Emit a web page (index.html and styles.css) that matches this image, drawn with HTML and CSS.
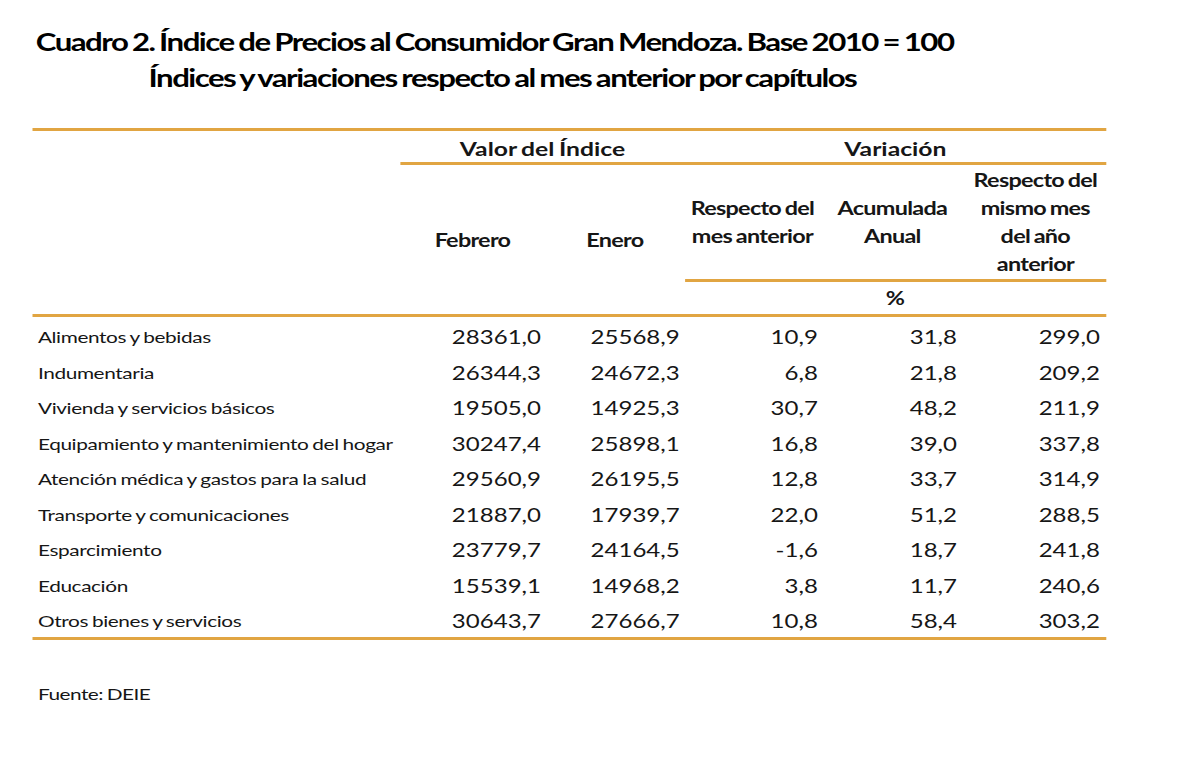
FILE: index.html
```html
<!DOCTYPE html>
<html lang="es">
<head>
<meta charset="utf-8">
<title>Cuadro 2. Índice de Precios al Consumidor Gran Mendoza</title>
<link rel="stylesheet" href="styles.css">
</head>
<body>
<div class="page">
  <h1 class="title">
    <span class="title-l1">Cuadro 2. Índice de Precios al Consumidor Gran Mendoza. Base 2010 = 100</span>
    <span class="title-l2">Índices y variaciones respecto al mes anterior por capítulos</span>
  </h1>

  <div class="tbl">
    <div class="h-blank"></div>
    <div class="h-group h-valor">Valor del Índice</div>
    <div class="h-group h-var">Variación</div>
    <div class="rule rule-group"></div>

    <div class="h-sub h-feb">Febrero</div>
    <div class="h-sub h-ene">Enero</div>
    <div class="h-sub h-resp">Respecto del<br>mes anterior</div>
    <div class="h-sub h-acum">Acumulada<br>Anual</div>
    <div class="h-sub h-anio">Respecto del<br>mismo mes<br>del año<br>anterior</div>
    <div class="rule rule-sub"></div>
    <div class="h-pct">%</div>
    <div class="rule rule-full"></div>

    <div class="row"><span class="lbl">Alimentos y bebidas</span><span class="n n1">28361,0</span><span class="n n2">25568,9</span><span class="n n3">10,9</span><span class="n n4">31,8</span><span class="n n5">299,0</span></div>
    <div class="row"><span class="lbl">Indumentaria</span><span class="n n1">26344,3</span><span class="n n2">24672,3</span><span class="n n3">6,8</span><span class="n n4">21,8</span><span class="n n5">209,2</span></div>
    <div class="row"><span class="lbl">Vivienda y servicios básicos</span><span class="n n1">19505,0</span><span class="n n2">14925,3</span><span class="n n3">30,7</span><span class="n n4">48,2</span><span class="n n5">211,9</span></div>
    <div class="row"><span class="lbl">Equipamiento y mantenimiento del hogar</span><span class="n n1">30247,4</span><span class="n n2">25898,1</span><span class="n n3">16,8</span><span class="n n4">39,0</span><span class="n n5">337,8</span></div>
    <div class="row"><span class="lbl">Atención médica y gastos para la salud</span><span class="n n1">29560,9</span><span class="n n2">26195,5</span><span class="n n3">12,8</span><span class="n n4">33,7</span><span class="n n5">314,9</span></div>
    <div class="row"><span class="lbl">Transporte y comunicaciones</span><span class="n n1">21887,0</span><span class="n n2">17939,7</span><span class="n n3">22,0</span><span class="n n4">51,2</span><span class="n n5">288,5</span></div>
    <div class="row"><span class="lbl">Esparcimiento</span><span class="n n1">23779,7</span><span class="n n2">24164,5</span><span class="n n3">-1,6</span><span class="n n4">18,7</span><span class="n n5">241,8</span></div>
    <div class="row"><span class="lbl">Educación</span><span class="n n1">15539,1</span><span class="n n2">14968,2</span><span class="n n3">3,8</span><span class="n n4">11,7</span><span class="n n5">240,6</span></div>
    <div class="row"><span class="lbl">Otros bienes y servicios</span><span class="n n1">30643,7</span><span class="n n2">27666,7</span><span class="n n3">10,8</span><span class="n n4">58,4</span><span class="n n5">303,2</span></div>
  </div>

  <p class="source">Fuente: DEIE</p>
</div>
</body>
</html>
```
FILE: styles.css
```css
html, body {
  margin: 0;
  padding: 0;
  background: #ffffff;
}

body {
  font-family: Lato, "Open Sans", sans-serif;
  color: #161616;
  overflow: hidden;
}

/* The reference is a horizontally stretched capture */
.page {
  width: 923px;
  transform: scaleX(1.3);
  transform-origin: 0 0;
}

.title {
  margin: 24px 0 0 0;
  width: 761px;
  text-align: center;
  font-size: 24px;
  font-weight: 700;
  line-height: 36px;
  letter-spacing: -1.17px;
  word-spacing: -1.1px;
  color: #000;
}

.title-l1,
.title-l2 {
  display: block;
  white-space: nowrap;
}

.title-l2 {
  padding-left: 12px;
}

.tbl {
  margin: 32px 0 0 25.4px;
  width: 825.4px;
  display: grid;
  grid-template-columns: 282.3px 111.5px 107.7px 103.8px 111.5px 108.5px;
  grid-template-rows: 31px 3px 114px 3px 32px 3px;
  grid-auto-rows: 35.5px;
  border-top: 3px solid #e1a542;
  border-bottom: 3px solid #e1a542;
}

.rule {
  background: #e1a542;
}

.h-blank { grid-column: 1; grid-row: 1 / 6; }

.h-group {
  grid-row: 1;
  display: flex;
  align-items: center;
  justify-content: center;
  font-weight: 700;
  font-size: 19px;
  word-spacing: -1.2px;
  padding-top: 3px;
}
.h-valor { grid-column: 2 / 4; }
.h-var { grid-column: 4 / 7; }

.rule-group { grid-column: 2 / 7; grid-row: 2; }

.h-sub {
  display: flex;
  align-items: center;
  justify-content: center;
  text-align: center;
  font-weight: 700;
  font-size: 18px;
  line-height: 28px;
  letter-spacing: -0.55px;
  word-spacing: -1px;
  white-space: nowrap;
}
.h-feb { grid-column: 2; grid-row: 3 / 6; }
.h-ene { grid-column: 3; grid-row: 3 / 6; }
.h-resp { grid-column: 4; grid-row: 3; }
.h-acum { grid-column: 5; grid-row: 3; }
.h-anio { grid-column: 6; grid-row: 3; }

.rule-sub { grid-column: 4 / 7; grid-row: 4; }

.h-pct {
  grid-column: 4 / 7;
  grid-row: 5;
  display: flex;
  align-items: center;
  justify-content: center;
  font-weight: 700;
  font-size: 18px;
}

.rule-full { grid-column: 1 / 7; grid-row: 6; }

.row {
  display: contents;
}

.lbl,
.n {
  display: flex;
  align-items: center;
  padding-top: 5px;
  white-space: nowrap;
}

.lbl {
  padding-left: 3.8px;
  font-size: 16px;
  letter-spacing: -0.3px;
  word-spacing: -0.8px;
  padding-bottom: 1px;
}

.n {
  justify-content: flex-end;
  font-size: 18.5px;
}

.n1 { padding-right: 3px; }
.n2 { padding-right: 4px; }
.n3 { padding-right: 1.5px; }
.n4 { padding-right: 6px; }
.n5 { padding-right: 4.6px; }

.source {
  margin: 42px 0 0 29.2px;
  font-size: 16px;
  line-height: 24px;
  letter-spacing: -0.4px;
  word-spacing: -0.8px;
}
```
